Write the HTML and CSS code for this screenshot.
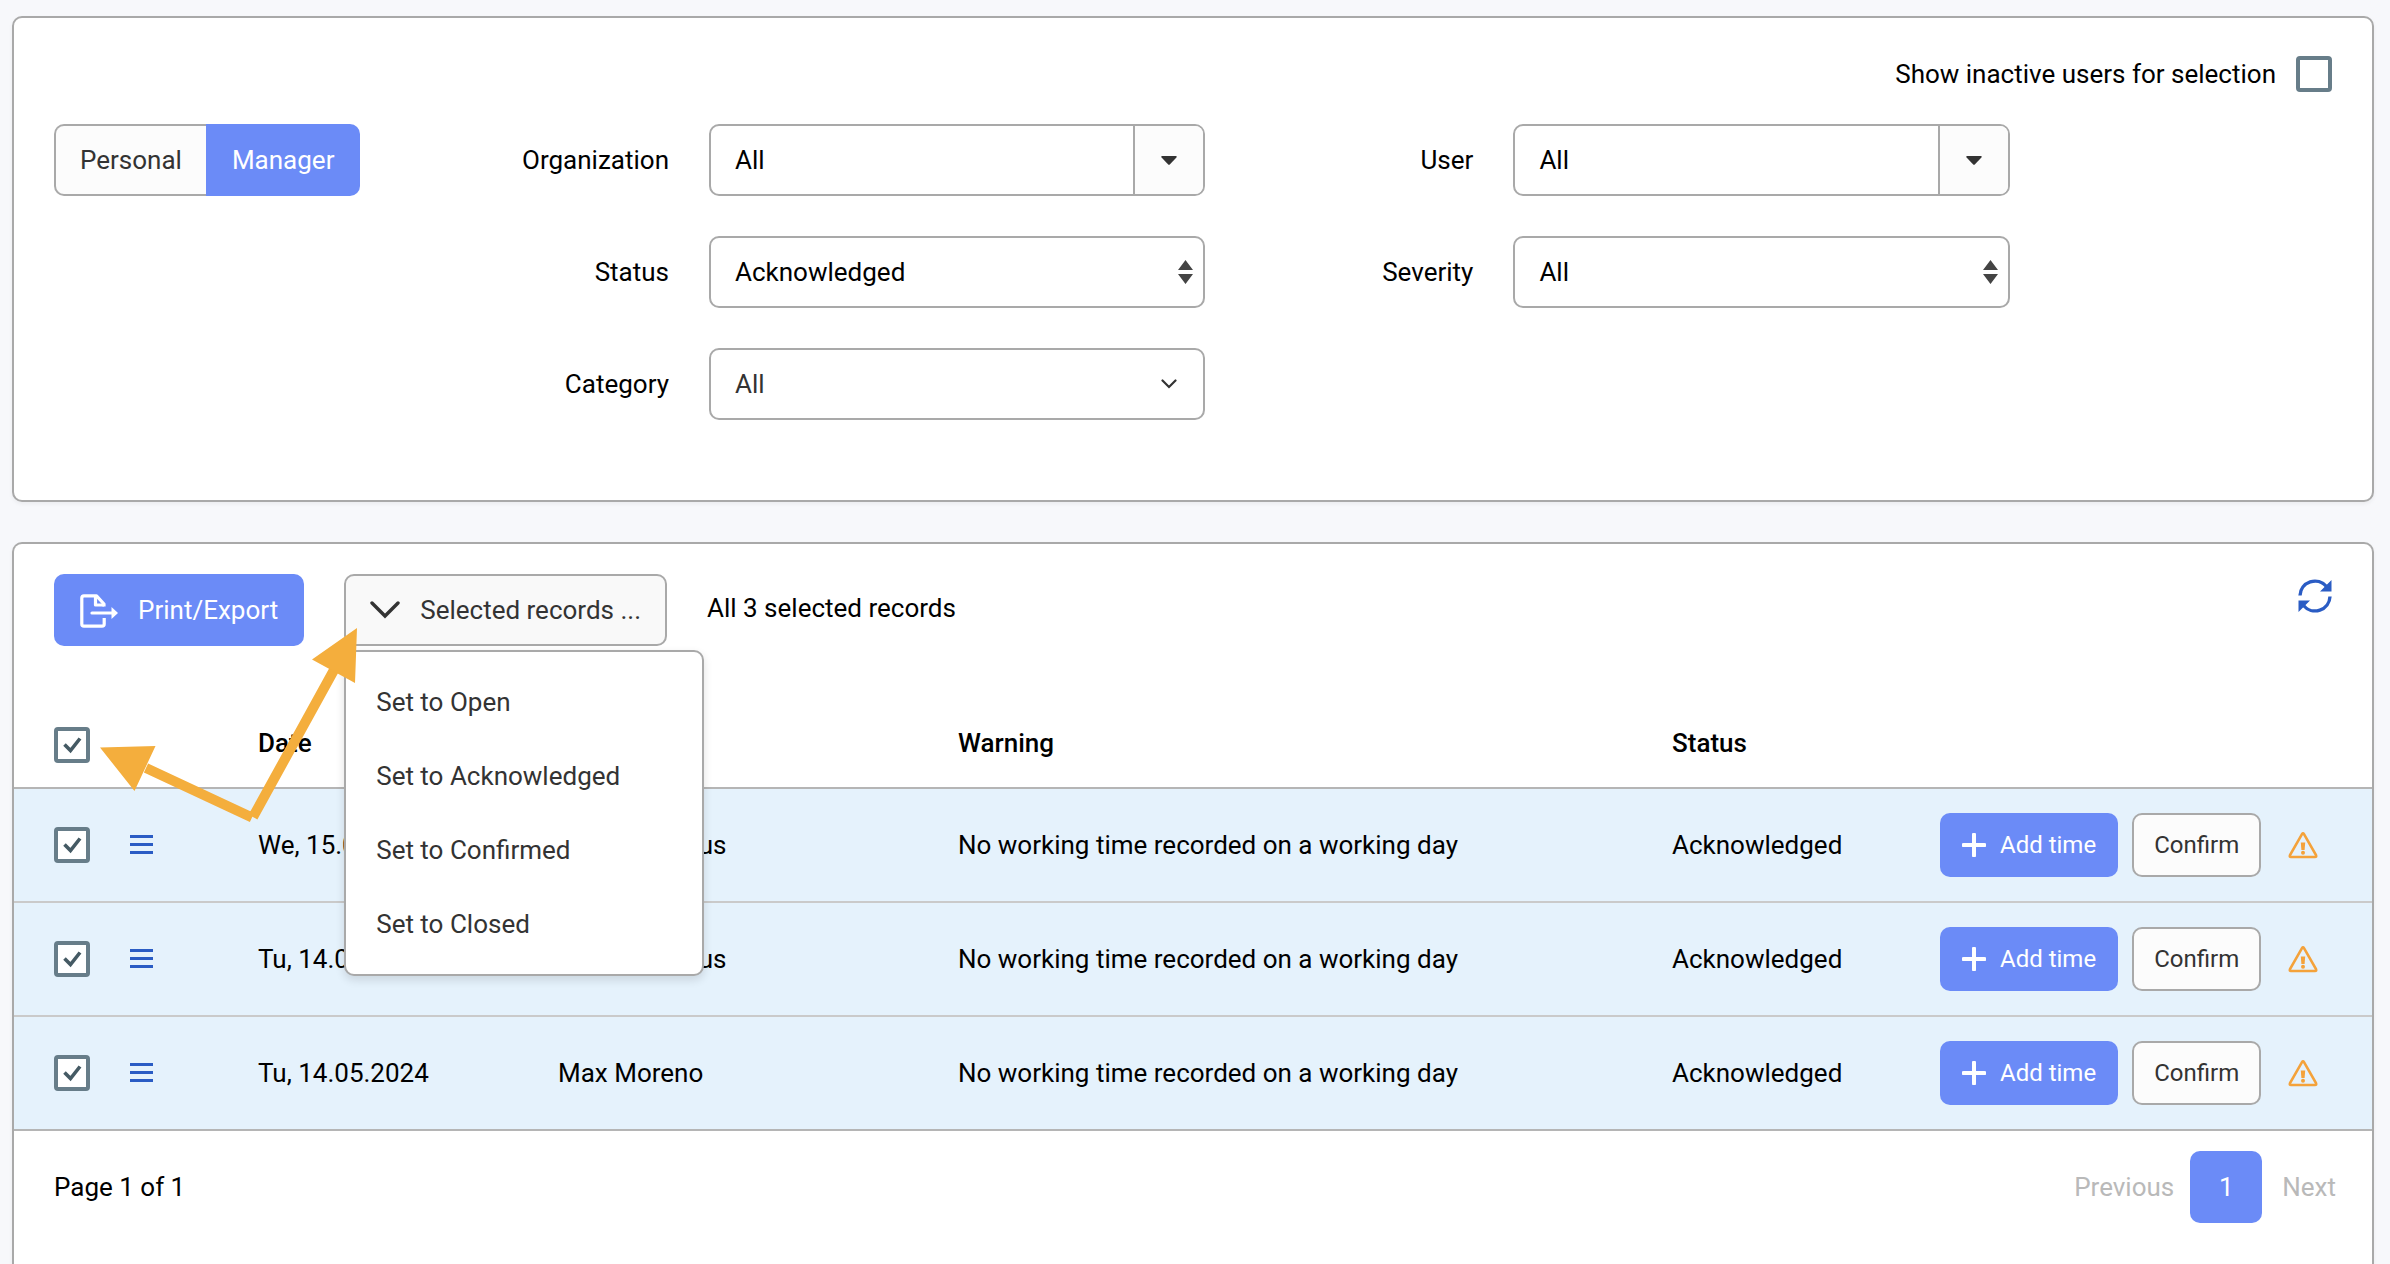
FILE: index.html
```html
<!DOCTYPE html>
<html lang="en">
<head>
<meta charset="utf-8">
<title>Warnings</title>
<link rel="stylesheet" href="styles.css">
</head>
<body>
<svg class="sprite" aria-hidden="true">
  <symbol id="i-caret" viewBox="0 0 16 9"><path d="M1 0h14q1.2.4.4 1.4L8.8 8.4q-.8.8-1.6 0L.6 1.400Q-.2.4 1 0z" fill="currentColor"/></symbol>
  <symbol id="i-sort" viewBox="0 0 15 24"><path d="M7.500 0L15 10H0zM7.500 24L15 14H0z" fill="currentColor"/></symbol>
  <symbol id="i-chevron" viewBox="0 0 30 18"><path d="M2 2l13 13L28 2" fill="none" stroke="currentColor" stroke-width="3.400" stroke-linecap="round"/></symbol>
  <symbol id="i-chevron-small" viewBox="0 0 16 10"><path d="M1.500 1.500L8 8l6.500-6.500" fill="none" stroke="currentColor" stroke-width="2.200" stroke-linecap="round"/></symbol>
  <symbol id="i-menu" viewBox="0 0 23 20"><path d="M0 1.500h23M0 9.500h23M0 17.500h23" fill="none" stroke="currentColor" stroke-width="3"/></symbol>
  <symbol id="i-plus" viewBox="0 0 24 24"><path d="M12 1.500v21M1.500 12h21" fill="none" stroke="currentColor" stroke-width="4" stroke-linecap="round"/></symbol>
  <symbol id="i-warn" viewBox="0 0 30 27"><path d="M14 2.200q1-1.600 2 0l12 21q.8 1.800-1 1.800H3q-1.800 0-1-1.800z" fill="none" stroke="currentColor" stroke-width="2.600"/><path d="M12.800 10.500h4.400l-.6 7.500h-3.200z" fill="currentColor"/><circle cx="15" cy="20.800" r="2" fill="currentColor"/></symbol>
</svg>

<form class="card filters">
  <div class="inactive">
    <label for="inactive">Show inactive users for selection</label>
    <input class="check" type="checkbox" id="inactive">
  </div>
  <div class="filter-grid">
    <div class="toggle">
      <button type="button" class="toggle-btn">Personal</button>
      <button type="button" class="toggle-btn active">Manager</button>
    </div>
    <div class="filter-col">
      <div class="pair">
        <label for="organization">Organization</label>
        <div class="field combo">
          <input type="text" id="organization" value="All">
          <button type="button" aria-label="Choose organization"><svg class="caret"><use href="#i-caret"/></svg></button>
        </div>
      </div>
      <div class="pair">
        <label for="status">Status</label>
        <div class="field picker">
          <select id="status"><option>Acknowledged</option></select>
          <svg class="sort"><use href="#i-sort"/></svg>
        </div>
      </div>
      <div class="pair">
        <label for="category">Category</label>
        <div class="field picker soft">
          <select id="category"><option>All</option></select>
          <svg class="small-chevron"><use href="#i-chevron-small"/></svg>
        </div>
      </div>
    </div>
    <div class="filter-col">
      <div class="pair">
        <label for="user">User</label>
        <div class="field combo">
          <input type="text" id="user" value="All">
          <button type="button" aria-label="Choose user"><svg class="caret"><use href="#i-caret"/></svg></button>
        </div>
      </div>
      <div class="pair">
        <label for="severity">Severity</label>
        <div class="field picker">
          <select id="severity"><option>All</option></select>
          <svg class="sort"><use href="#i-sort"/></svg>
        </div>
      </div>
    </div>
  </div>
</form>

<main class="card results">
  <div class="toolbar">
    <button type="button" class="btn primary">
      <svg class="export" viewBox="0 0 38 36"><g fill="none" stroke="currentColor" stroke-width="3.200" stroke-linejoin="round"><path d="M24 14.500V12L16.500 3.800H4Q1.800 3.800 1.800 6v26q0 2.200 2.200 2.200h18q2.200 0 2.200-2.200v-6"/><path d="M15.500 4v9h8.500"/><path d="M12 21h20" stroke-linecap="round"/></g><path d="M31.500 15l6.500 6-6.500 6z" fill="currentColor"/></svg>
      Print/Export
    </button>
    <div class="dropdown">
      <button type="button" class="btn plain" aria-expanded="true">
        <svg class="chevron"><use href="#i-chevron"/></svg>
        Selected records ...
      </button>
      <div class="menu">
        <button type="button">Set to Open</button>
        <button type="button">Set to Acknowledged</button>
        <button type="button">Set to Confirmed</button>
        <button type="button">Set to Closed</button>
      </div>
    </div>
    <span class="count">All 3 selected records</span>
    <button type="button" class="refresh" aria-label="Refresh">
      <svg viewBox="0 0 34 34"><g fill="none" stroke="currentColor" stroke-width="3.400"><path d="M2 16.500A15 15 0 0 1 28.500 7.500"/><path d="M32 17.500A15 15 0 0 1 5.500 26.500"/></g><path d="M33.500 1v11.500H22zM.5 33V21.500H12z" fill="currentColor"/></svg>
    </button>
  </div>

  <table>
    <colgroup>
      <col class="c-check"><col class="c-menu"><col class="c-date"><col class="c-user"><col><col class="c-status"><col class="c-actions">
    </colgroup>
    <thead>
      <tr>
        <th><input class="check" type="checkbox" aria-label="Select all" checked></th>
        <th></th>
        <th>Date</th>
        <th>User</th>
        <th>Warning</th>
        <th>Status</th>
        <th></th>
      </tr>
    </thead>
    <tbody>
      <tr>
        <td><input class="check" type="checkbox" aria-label="Select row" checked></td>
        <td><button type="button" class="row-menu" aria-label="Row menu"><svg><use href="#i-menu"/></svg></button></td>
        <td>We, 15.05.2024</td>
        <td>Martin Markus</td>
        <td>No working time recorded on a working day</td>
        <td>Acknowledged</td>
        <td><div class="actions"><button type="button" class="btn small primary"><svg class="plus"><use href="#i-plus"/></svg>Add time</button><button type="button" class="btn small plain">Confirm</button><svg class="warn"><use href="#i-warn"/></svg></div></td>
      </tr>
      <tr>
        <td><input class="check" type="checkbox" aria-label="Select row" checked></td>
        <td><button type="button" class="row-menu" aria-label="Row menu"><svg><use href="#i-menu"/></svg></button></td>
        <td>Tu, 14.05.2024</td>
        <td>Martin Markus</td>
        <td>No working time recorded on a working day</td>
        <td>Acknowledged</td>
        <td><div class="actions"><button type="button" class="btn small primary"><svg class="plus"><use href="#i-plus"/></svg>Add time</button><button type="button" class="btn small plain">Confirm</button><svg class="warn"><use href="#i-warn"/></svg></div></td>
      </tr>
      <tr>
        <td><input class="check" type="checkbox" aria-label="Select row" checked></td>
        <td><button type="button" class="row-menu" aria-label="Row menu"><svg><use href="#i-menu"/></svg></button></td>
        <td>Tu, 14.05.2024</td>
        <td>Max Moreno</td>
        <td>No working time recorded on a working day</td>
        <td>Acknowledged</td>
        <td><div class="actions"><button type="button" class="btn small primary"><svg class="plus"><use href="#i-plus"/></svg>Add time</button><button type="button" class="btn small plain">Confirm</button><svg class="warn"><use href="#i-warn"/></svg></div></td>
      </tr>
    </tbody>
  </table>

  <footer class="pager">
    <span>Page 1 of 1</span>
    <nav class="pages" aria-label="Pages">
      <button type="button" class="step" disabled>Previous</button>
      <button type="button" class="page">1</button>
      <button type="button" class="step" disabled>Next</button>
    </nav>
  </footer>

  <svg class="arrows" viewBox="0 0 260 200" aria-hidden="true">
    <path d="M46 142L152 191.500M153 191L234 44" fill="none" stroke="currentColor" stroke-width="10"/>
    <path d="M0 121.500L55.500 120L34.500 165zM257 2L212 33.500L255 57z" fill="currentColor"/>
  </svg>
</main>
</body>
</html>
```
FILE: styles.css
```css
:root {
  --line: #a9a9a9;
  --blue: #6b8bf7;
  --link: #2a5cc4;
  --ink: #333333;
}

* {
  box-sizing: border-box;
}

body {
  margin: 0;
  padding: 16px 16px 0 12px;
  min-height: 100vh;
  display: flex;
  flex-direction: column;
  gap: 40px;
  background: #f7f8fb;
  color: #000000;
  font: 26px/32px Roboto, sans-serif;
}

button,
input,
select {
  font: inherit;
  color: inherit;
  margin: 0;
}

svg {
  display: block;
  flex: none;
}

.sprite {
  position: absolute;
  width: 0;
  height: 0;
}

.card {
  background: #ffffff;
  border: 2px solid var(--line);
  border-radius: 10px;
  box-shadow: 0 2px 4px rgba(0, 0, 0, 0.05);
}

/* Filters */

.filters {
  padding: 38px 40px 80px;
}

.inactive {
  display: flex;
  justify-content: flex-end;
  align-items: center;
  gap: 20px;
  margin-bottom: 32px;
}

.check {
  display: block;
  appearance: none;
  width: 36px;
  height: 36px;
  border: 4px solid #677d89;
  border-radius: 4px;
  background: #ffffff;
}

.check:checked {
  background: #ffffff url("data:image/svg+xml,%3Csvg xmlns='http://www.w3.org/2000/svg' viewBox='0 0 28 28'%3E%3Cpath d='M6.500 13.500l6 6L22 7.500' fill='none' stroke='%23455a64' stroke-width='3.600'/%3E%3C/svg%3E") center / 28px 28px;
}

.filter-grid {
  display: grid;
  grid-template-columns: 347fr 804fr 805fr 322fr;
}

.toggle {
  display: flex;
  align-items: flex-start;
}

.toggle-btn {
  height: 72px;
  padding: 0 24px;
  border: 2px solid var(--line);
  border-right: 0;
  border-radius: 10px 0 0 10px;
  background: #fcfcfc;
  color: var(--ink);
}

.toggle-btn.active {
  padding: 0 26px;
  border: 0;
  border-radius: 0 10px 10px 0;
  background: var(--blue);
  color: #ffffff;
}

.filter-col {
  display: flex;
  flex-direction: column;
  gap: 40px;
}

.pair {
  display: grid;
  grid-template-columns: 308fr 496fr;
  align-items: center;
}

.pair label {
  padding-right: 40px;
  text-align: right;
}

.field {
  display: flex;
  height: 72px;
  border: 2px solid var(--line);
  border-radius: 10px;
  background: #ffffff;
  overflow: hidden;
}

.field input,
.field select {
  flex: 1;
  min-width: 0;
  border: 0;
  padding: 0 24px;
  background: transparent;
  outline: 0;
}

.field select {
  appearance: none;
}

.combo button {
  display: flex;
  align-items: center;
  justify-content: center;
  width: 70px;
  padding: 0;
  border: 0;
  border-left: 2px solid var(--line);
  background: #fcfcfc;
  color: var(--ink);
}

.caret {
  width: 16px;
  height: 9px;
}

.picker {
  display: grid;
  align-items: center;
}

.picker > * {
  grid-area: 1 / 1;
}

.picker select {
  width: 100%;
  height: 100%;
}

.picker svg {
  justify-self: end;
  pointer-events: none;
}

.sort {
  width: 15px;
  height: 24px;
  margin-right: 10px;
  color: #444444;
}

.soft {
  color: var(--ink);
}

.small-chevron {
  width: 16px;
  height: 10px;
  margin-right: 26px;
}

/* Results */

.results {
  position: relative;
  flex: 1;
  border-bottom: 0;
  border-radius: 10px 10px 0 0;
}

.toolbar {
  display: flex;
  align-items: center;
  gap: 40px;
  padding: 30px 40px 57px;
}

.btn {
  display: flex;
  align-items: center;
  justify-content: center;
  gap: 20px;
  height: 72px;
  padding: 0 26px;
  border: 0;
  border-radius: 10px;
}

.primary {
  background: var(--blue);
  color: #ffffff;
}

.plain {
  border: 2px solid var(--line);
  background: #f9f9f9;
  color: var(--ink);
  padding: 0 24px;
}

.export {
  width: 38px;
  height: 36px;
}

.chevron {
  width: 30px;
  height: 18px;
}

.dropdown {
  position: relative;
}

.menu {
  position: absolute;
  z-index: 1;
  top: 76px;
  left: 0;
  width: 360px;
  padding: 13px 0;
  border: 2px solid var(--line);
  border-radius: 10px;
  background: #ffffff;
  box-shadow: 0 4px 10px rgba(0, 0, 0, 0.12);
}

.menu button {
  display: block;
  width: 100%;
  height: 74px;
  padding: 0 30px;
  border: 0;
  background: transparent;
  color: var(--ink);
  text-align: left;
}

.count {
  padding-bottom: 4px;
}

.refresh {
  align-self: flex-start;
  margin: 5px 0 0 auto;
  padding: 0;
  border: 0;
  background: transparent;
  color: var(--link);
}

.refresh svg {
  width: 34px;
  height: 34px;
}

table {
  width: 100%;
  table-layout: fixed;
  border-spacing: 0;
}

.c-check {
  width: 116px;
}

.c-menu {
  width: 128px;
}

.c-date {
  width: 300px;
}

.c-user {
  width: 400px;
}

.c-status {
  width: 268px;
}

.c-actions {
  width: 432px;
}

th,
td {
  padding: 0;
  text-align: left;
  vertical-align: middle;
}

th {
  height: 86px;
  padding-bottom: 4px;
  border-bottom: 2px solid #b5b5b5;
  font-weight: 500;
}

td {
  height: 114px;
  border-bottom: 2px solid #cacaca;
  background: #e5f2fc;
}

tr:last-child td {
  border-bottom-color: #b5b5b5;
}

th:first-child,
td:first-child {
  padding: 0 0 0 40px;
}

.row-menu {
  display: block;
  padding: 0;
  border: 0;
  background: transparent;
  color: var(--link);
}

.row-menu svg {
  width: 23px;
  height: 20px;
}

.actions {
  display: flex;
  align-items: center;
  gap: 14px;
}

.small {
  height: 64px;
  gap: 14px;
  padding: 0 22px;
  font-size: 24px;
}

.small.plain {
  background: #fcfcfc;
  padding: 0 20px;
}

.plus {
  width: 24px;
  height: 24px;
}

.warn {
  width: 30px;
  height: 27px;
  margin-left: 13px;
  color: #f4a23a;
}

.pager {
  display: flex;
  align-items: center;
  justify-content: space-between;
  padding: 20px 36px 20px 40px;
}

.pages {
  display: flex;
  align-items: center;
  gap: 16px;
}

.page {
  width: 72px;
  height: 72px;
  border: 0;
  border-radius: 10px;
  background: var(--blue);
  color: #ffffff;
}

.step {
  padding: 0;
  border: 0;
  background: transparent;
  color: #b9b9b9;
}

.page + .step {
  margin-left: 4px;
}

/* Callout arrows drawn over the table */

.arrows {
  position: absolute;
  z-index: 2;
  top: 82px;
  left: 86px;
  width: 260px;
  height: 200px;
  color: #f4ae3d;
  pointer-events: none;
}
```
